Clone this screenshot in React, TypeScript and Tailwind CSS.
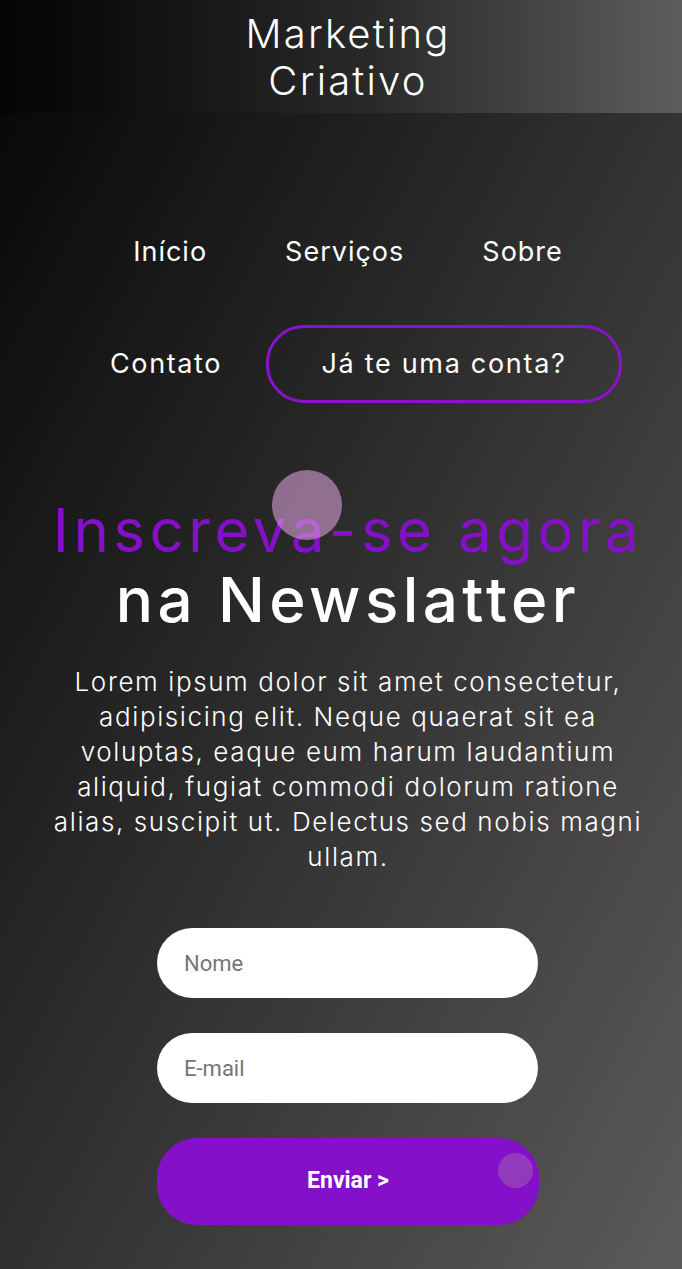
import React from "react";

const navLinks = ["Início", "Serviços", "Sobre"];

const paragraph = [
  "Lorem ipsum dolor sit amet consectetur,",
  "adipisicing elit. Neque quaerat sit ea",
  "voluptas, eaque eum harum laudantium",
  "aliquid, fugiat commodi dolorum ratione",
  "alias, suscipit ut. Delectus sed nobis magni",
  "ullam.",
];

export default function App() {
  return (
    <div className="min-h-[1269px] w-full bg-[linear-gradient(to_bottom_right,#050505,#5c5a5a)] font-['Inter','Noto_Sans',sans-serif] text-white">
      {/* Header */}
      <header className="h-[113px] bg-[linear-gradient(to_right,#030303,#2a2a2a_55%,#5e5d5d)] pl-[14px] pt-[10px] text-center">
        <h1 className="text-[40px] font-light leading-[47px] tracking-[2.2px]">
          Marketing
          <br />
          Criativo
        </h1>
      </header>

      <main className="pl-[14px]">
        {/* Navigation */}
        <nav className="pt-[111px]">
          <ul className="flex h-[56px] items-center justify-center gap-[78px] text-[27px] tracking-[1px]">
            {navLinks.map((l) => (
              <li key={l}>{l}</li>
            ))}
          </ul>
          <ul className="mt-[45px] flex h-[78px] items-center justify-center gap-[44px] pl-[36px] text-[27px] tracking-[1.6px]">
            <li>Contato</li>
            <li>
              <button className="h-[78px] w-[356px] rounded-[38px] border-[3px] border-[#8a12cc] tracking-[1.7px]">
                Já te uma conta?
              </button>
            </li>
          </ul>
        </nav>

        {/* Newsletter */}
        <section className="relative mt-[92px] text-center">
          <div className="absolute left-[258px] top-[-25px] h-[70px] w-[70px] rounded-full bg-[rgba(225,165,225,0.56)]" />
          <h2 className="text-[60px] leading-[70px] tracking-[4.5px] text-[#8510c9]">
            Inscreva-se agora
          </h2>
          <h2 className="text-[62px] font-medium leading-[70px] tracking-[4.4px]">
            na Newslatter
          </h2>

          <p className="mx-auto mt-[29px] text-[26px] font-light leading-[35px] tracking-[1.6px]">
            {paragraph.map((line, i) => (
              <span key={i} className="block whitespace-nowrap">
                {line}
              </span>
            ))}
          </p>

          <form className="mx-auto mt-[54px] flex w-[382px] flex-col gap-[35px] font-['Roboto',sans-serif]">
            <input
              placeholder="Nome"
              className="h-[70px] w-[381px] rounded-full bg-white pl-[27px] text-[22px] text-[#333] placeholder:text-[#757575] outline-none"
            />
            <input
              placeholder="E-mail"
              className="h-[70px] w-[381px] rounded-full bg-white pl-[27px] text-[22px] text-[#333] placeholder:text-[#757575] outline-none"
            />
            <button
              type="button"
              className="relative h-[87px] w-[382px] rounded-[40px] bg-[#8510c9] text-[23px] font-bold"
            >
              Enviar &gt;
              <span className="absolute right-[6px] top-[15px] h-[35px] w-[35px] rounded-full bg-[rgba(160,110,170,0.45)]" />
            </button>
          </form>
        </section>
      </main>
    </div>
  );
}
